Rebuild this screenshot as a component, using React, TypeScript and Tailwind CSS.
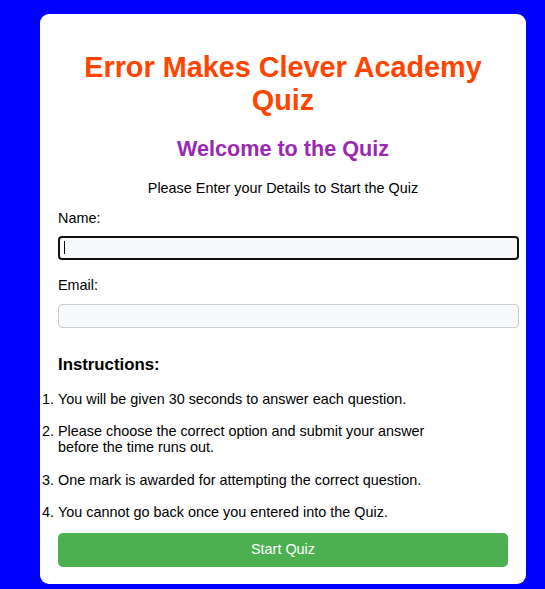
const instructions = [
  "You will be given 30 seconds to answer each question.",
  "Please choose the correct option and submit your answer before the time runs out.",
  "One mark is awarded for attempting the correct question.",
  "You cannot go back once you entered into the Quiz.",
];

export default function App() {
  return (
    <div className="min-h-[589px] bg-[#0000ff] pt-[14px] pb-[5px] font-['Liberation_Sans',Arial,sans-serif] text-[14.4px] text-black">
      <div className="ml-[40px] w-[486px] rounded-[9px] bg-white px-[18px] pt-[37px] pb-[17px]">
        <h1 className="text-center text-[28.8px] font-bold leading-[33px] text-[#ff4500]">
          Error Makes Clever Academy Quiz
        </h1>
        <h2 className="mt-[19px] text-center text-[21.6px] font-bold leading-[25px] text-[#9c27b0]">
          Welcome to the Quiz
        </h2>
        <p className="mt-[18.5px] text-center leading-[16.5px]">
          Please Enter your Details to Start the Quiz
        </p>

        <form className="mt-[13.5px]" onSubmit={(e) => e.preventDefault()}>
          <label className="block leading-[16.5px]" htmlFor="name">
            Name:
          </label>
          <div className="relative mt-[10px] w-[461px]">
            <input
              id="name"
              type="text"
              className="block h-[24px] w-full rounded-[4px] border-2 border-[#101010] bg-[#f8f9fd] px-[5px] outline-none"
            />
            {/* caret of the focused field */}
            <span className="pointer-events-none absolute top-[5px] left-[6px] h-[13px] w-px bg-black" />
          </div>

          <label className="mt-[17px] block leading-[16.5px]" htmlFor="email">
            Email:
          </label>
          <input
            id="email"
            type="email"
            className="mt-[10px] block h-[24px] w-[461px] rounded-[4px] border border-[#cccccc] bg-[#f8f9fd] px-[5px] outline-none"
          />
        </form>

        <h3 className="mt-[27px] text-[16.8px] font-bold leading-[19.3px]">Instructions:</h3>
        <ol className="mt-[17px] w-[390px] list-decimal">
          {instructions.map((item) => (
            <li key={item} className="mb-[16px] leading-[16.3px] last:mb-0">
              {item}
            </li>
          ))}
        </ol>

        <button
          type="button"
          className="mt-[13px] block h-[34px] w-full rounded-[5px] bg-[#4caf50] text-center text-[14.4px] text-white"
        >
          Start Quiz
        </button>
      </div>
    </div>
  );
}
